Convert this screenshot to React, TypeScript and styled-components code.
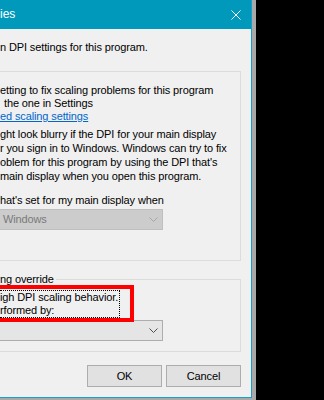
import React from "react";
import styled, { createGlobalStyle } from "styled-components";

const GlobalStyle = createGlobalStyle`
  html, body { margin: 0; padding: 0; background: #000; }
  body {
    width: 324px;
    height: 400px;
    overflow: hidden;
    font-family: "Segoe UI", "Liberation Sans", Arial, sans-serif;
  }
  * { box-sizing: border-box; }
`;

const Screen = styled.div`
  display: flex;
  width: 324px;
  height: 400px;
  background: #000;
`;

const Backdrop = styled.div`
  width: 256px;
  height: 400px;
  background: #a9a9a9;
`;

const Window = styled.div`
  width: 252px;
  height: 398px;
  border-right: 1px solid #18a0c6;
  border-bottom: 1px solid #18a0c6;
  background: #f0f0f0;
  display: flex;
  flex-direction: column;
  overflow: hidden;
`;

const TitleBar = styled.div`
  height: 29px;
  flex: 0 0 29px;
  background: #0099bc;
  color: #fff;
  display: flex;
  align-items: center;
  justify-content: space-between;
  font-size: 12px;
  line-height: 29px;
  white-space: nowrap;
`;

const TitleText = styled.span`
  margin-left: 0;
`;

const CloseIcon = styled.svg`
  width: 10px;
  height: 10px;
  margin-right: 10px;
  display: block;
`;

const Body = styled.div`
  flex: 1;
  display: flex;
  flex-direction: column;
  padding: 12px 10px 0 0;
  font-size: 11px;
  letter-spacing: -0.12px;
  color: #000;
`;

const Line = styled.div<{ $indent?: number; $height?: number }>`
  white-space: pre;
  line-height: ${(p) => p.$height ?? 13}px;
  margin-left: ${(p) => p.$indent ?? 0}px;
`;

const Group = styled.div<{ $top: number; $padTop: number; $padBottom: number }>`
  position: relative;
  display: flex;
  flex-direction: column;
  border: 1px solid #dcdcdc;
  border-left: none;
  margin-top: ${(p) => p.$top}px;
  padding: ${(p) => p.$padTop}px 0 ${(p) => p.$padBottom}px 0;
`;

const GroupLabel = styled.div`
  margin-top: -7px;
  width: fit-content;
  padding-right: 2px;
  background: #f0f0f0;
  line-height: 13px;
  white-space: pre;
`;

const Block = styled.div<{ $gap: number }>`
  display: flex;
  flex-direction: column;
  margin-top: ${(p) => p.$gap}px;
`;

const Link = styled.a`
  color: #0066cc;
  text-decoration: underline;
  cursor: pointer;
`;

const FocusBox = styled.div`
  display: flex;
  flex-direction: column;
  width: fit-content;
  margin-top: 4px;
  border: 1px dotted #000;
  border-left: none;
  padding-right: 1px;
`;

const Dropdown = styled.div<{ $disabled?: boolean; $gap: number }>`
  display: flex;
  align-items: center;
  width: 163px;
  height: 21px;
  margin-top: ${(p) => p.$gap}px;
  border: 1px solid ${(p) => (p.$disabled ? "#bfbfbf" : "#adadad")};
  border-left: none;
  background: ${(p) => (p.$disabled ? "#cccccc" : "#e5e5e5")};
  color: ${(p) => (p.$disabled ? "#7a7a7a" : "#000")};
`;

const DropText = styled.span`
  flex: 1;
  line-height: 19px;
  white-space: pre;
  overflow: hidden;
`;

const Arrow = styled.div`
  width: 17px;
  height: 19px;
  display: flex;
  align-items: center;
  justify-content: center;
`;

const Annotation = styled.div`
  position: absolute;
  top: 5px;
  left: -10px;
  width: 144px;
  height: 37px;
  border: 4px solid #ff0000;
  pointer-events: none;
`;

const ButtonRow = styled.div`
  display: flex;
  justify-content: flex-end;
  gap: 4px;
  margin-top: 13px;
`;

const Button = styled.button`
  width: 75px;
  height: 22px;
  padding: 0;
  border: 1px solid #adadad;
  background: #e1e1e1;
  color: #000;
  font-family: inherit;
  font-size: 11px;
  letter-spacing: -0.12px;
  line-height: 20px;
`;

const Chevron = ({ color }: { color: string }) => (
  <svg width="9" height="5" viewBox="0 0 9 5" style={{ display: "block" }}>
    <path d="M0.5 0.5 L4.5 4.5 L8.5 0.5" fill="none" stroke={color} strokeWidth="1" />
  </svg>
);

export default function App() {
  return (
    <>
      <GlobalStyle />
      <Screen>
        <Backdrop>
          <Window>
            <TitleBar>
              <TitleText>ies</TitleText>
              <CloseIcon viewBox="0 0 10 10">
                <path d="M0.5 0.5 L9.5 9.5 M9.5 0.5 L0.5 9.5" stroke="#fff" strokeWidth="1" fill="none" />
              </CloseIcon>
            </TitleBar>
            <Body>
              <Line>n DPI settings for this program.</Line>
              <Group $top={17} $padTop={12} $padBottom={30}>
                <Block $gap={0}>
                  <Line>etting to fix scaling problems for this program</Line>
                  <Line $indent={4}>the one in Settings</Line>
                  <Line>
                    <Link>ed scaling settings</Link>
                  </Line>
                </Block>
                <Block $gap={4}>
                  <Line $height={14}>ght look blurry if the DPI for your main display</Line>
                  <Line $height={14}>r you sign in to Windows. Windows can try to fix</Line>
                  <Line $height={14}>oblem for this program by using the DPI that's</Line>
                  <Line $height={14}>main display when you open this program.</Line>
                </Block>
                <Block $gap={11}>
                  <Line>hat's set for my main display when</Line>
                </Block>
                <Dropdown $disabled $gap={2}>
                  <DropText> Windows</DropText>
                  <Arrow>
                    <Chevron color="#a6a6a6" />
                  </Arrow>
                </Dropdown>
              </Group>
              <Group $top={18} $padTop={0} $padBottom={10}>
                <GroupLabel>ng override</GroupLabel>
                <FocusBox>
                  <Line>igh DPI scaling behavior.</Line>
                  <Line>rformed by:</Line>
                </FocusBox>
                <Dropdown $gap={2}>
                  <DropText />
                  <Arrow>
                    <Chevron color="#505050" />
                  </Arrow>
                </Dropdown>
                <Annotation />
              </Group>
              <ButtonRow>
                <Button>OK</Button>
                <Button>Cancel</Button>
              </ButtonRow>
            </Body>
          </Window>
        </Backdrop>
      </Screen>
    </>
  );
}
